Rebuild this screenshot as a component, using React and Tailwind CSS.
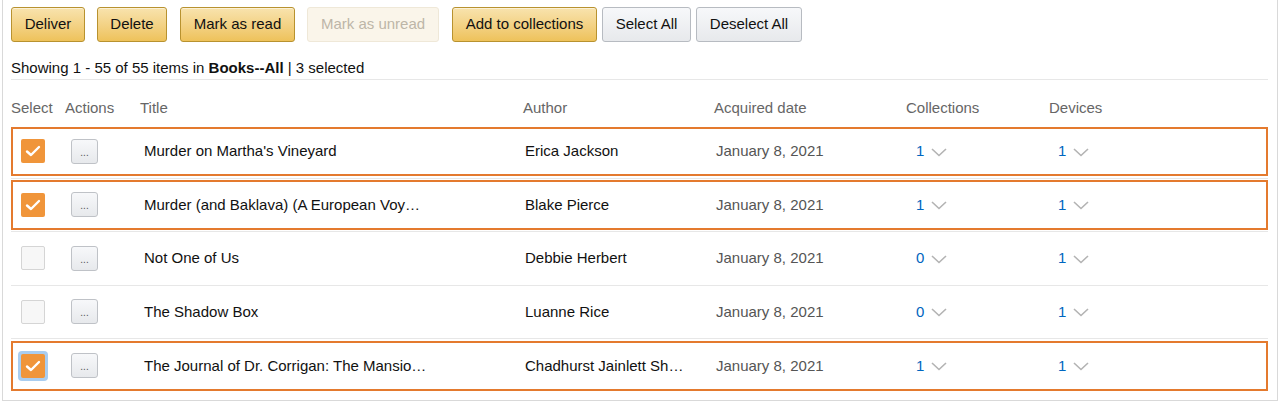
import React from "react";

const books = [
  { title: "Murder on Martha's Vineyard", author: "Erica Jackson", coll: 1, dev: 1, selected: true },
  { title: "Murder (and Baklava) (A European Voy…", author: "Blake Pierce", coll: 1, dev: 1, selected: true },
  { title: "Not One of Us", author: "Debbie Herbert", coll: 0, dev: 1, selected: false },
  { title: "The Shadow Box", author: "Luanne Rice", coll: 0, dev: 1, selected: false },
  { title: "The Journal of Dr. Corrigan: The Mansio…", author: "Chadhurst Jainlett Sh…", coll: 1, dev: 1, selected: true, focus: true },
];

const Chevron = () => (
  <svg width="16" height="9" viewBox="0 0 16 9" fill="none" className="ml-[7px] mt-[2px]">
    <polyline points="1,1 8,7.5 15,1" stroke="#b3b3b3" strokeWidth="1.6" />
  </svg>
);

const Checkbox = ({ checked, focus }) => {
  if (checked) {
    return (
      <div className={focus ? "w-fit rounded-[4px] p-[3px] bg-[#a9cdf0] -m-[3px]" : "w-fit"}>
        <div className="w-[24px] h-[24px] rounded-[2px] bg-[#f0953a] flex items-center justify-center">
          <svg width="16" height="12" viewBox="0 0 16 12" fill="none">
            <polyline points="2,6.5 6,10 14,2" stroke="white" strokeWidth="2.4" strokeLinecap="round" strokeLinejoin="round" />
          </svg>
        </div>
      </div>
    );
  }
  return <div className="w-[24px] h-[24px] rounded-[2px] border border-[#d5d5d5] bg-[#f7f7f7]" />;
};

const yellowBtn = "h-[35px] rounded-[3px] border border-[#b8922f] bg-gradient-to-b from-[#f8e3ad] to-[#eec25a] text-[#111] shadow-[inset_0_1px_0_rgba(255,255,255,0.5)]";
const grayBtn = "h-[35px] rounded-[3px] border border-[#b7bbc1] bg-gradient-to-b from-[#f7f8fa] to-[#e7e9ec] text-[#111]";

export default function App() {
  return (
    <div className="w-[1280px] h-[403px] bg-white overflow-hidden" style={{ fontFamily: '"Liberation Sans", Arial, sans-serif' }}>
      <div className="h-[401px] mx-[2px] border border-[#d9d9d9] border-t-0 bg-white pl-[8px] pr-[9px]">
        {/* toolbar */}
        <div className="flex items-center pt-[7px] text-[15px]">
          <button className={`${yellowBtn} w-[74px]`}>Deliver</button>
          <button className={`${yellowBtn} w-[70px] ml-[12px]`}>Delete</button>
          <button className={`${yellowBtn} w-[115px] ml-[13px]`}>Mark as read</button>
          <button className="h-[35px] w-[132px] ml-[12px] rounded-[3px] border border-[#efe8d8] bg-[#faf5ea] text-[#bdb6a8]">Mark as unread</button>
          <button className={`${yellowBtn} w-[145px] ml-[13px]`}>Add to collections</button>
          <button className={`${grayBtn} w-[89px] ml-[5px]`}>Select All</button>
          <button className={`${grayBtn} w-[106px] ml-[5px]`}>Deselect All</button>
        </div>

        <div className="mt-[17px] text-[15px] text-[#111] leading-[17px]">
          Showing 1 - 55 of 55 items in <span className="font-bold">Books--All</span> | 3 selected
        </div>
        <div className="mt-[3px] border-t border-[#e7e7e7]" />

        {/* header */}
        <div className="grid grid-cols-[54px_75px_383px_191px_192px_143px_1fr] h-[45px] items-end pb-[9px] text-[15px] leading-[17px] text-[#666]">
          <div>Select</div>
          <div>Actions</div>
          <div>Title</div>
          <div>Author</div>
          <div>Acquired date</div>
          <div>Collections</div>
          <div>Devices</div>
        </div>

        {/* rows */}
        {books.map((b, i) => (
          <div key={i} className={`h-[53.5px] py-[1.5px] ${i < books.length - 1 ? "border-b border-[#e7e7e7]" : ""}`}>
            <div className={`h-full border-2 ${b.selected ? "border-[#e47a2e]" : "border-transparent"} pl-[8px] grid grid-cols-[50px_73px_381px_191px_200px_142px_1fr] items-center text-[15px] text-[#111]`}>
              <div><Checkbox checked={b.selected} focus={b.focus} /></div>
              <div>
                <button className="w-[27px] h-[25px] rounded-[3px] border border-[#bfc2c7] bg-gradient-to-b from-[#f7f8fa] to-[#e7e9ec] text-[10px] text-[#555] leading-none pt-[3px]">...</button>
              </div>
              <div className="whitespace-nowrap">{b.title}</div>
              <div className="whitespace-nowrap">{b.author}</div>
              <div className="text-[#555]">January 8, 2021</div>
              <div className="flex items-center text-[#0066c0]">{b.coll}<Chevron /></div>
              <div className="flex items-center text-[#0066c0]">{b.dev}<Chevron /></div>
            </div>
          </div>
        ))}
      </div>
    </div>
  );
}
